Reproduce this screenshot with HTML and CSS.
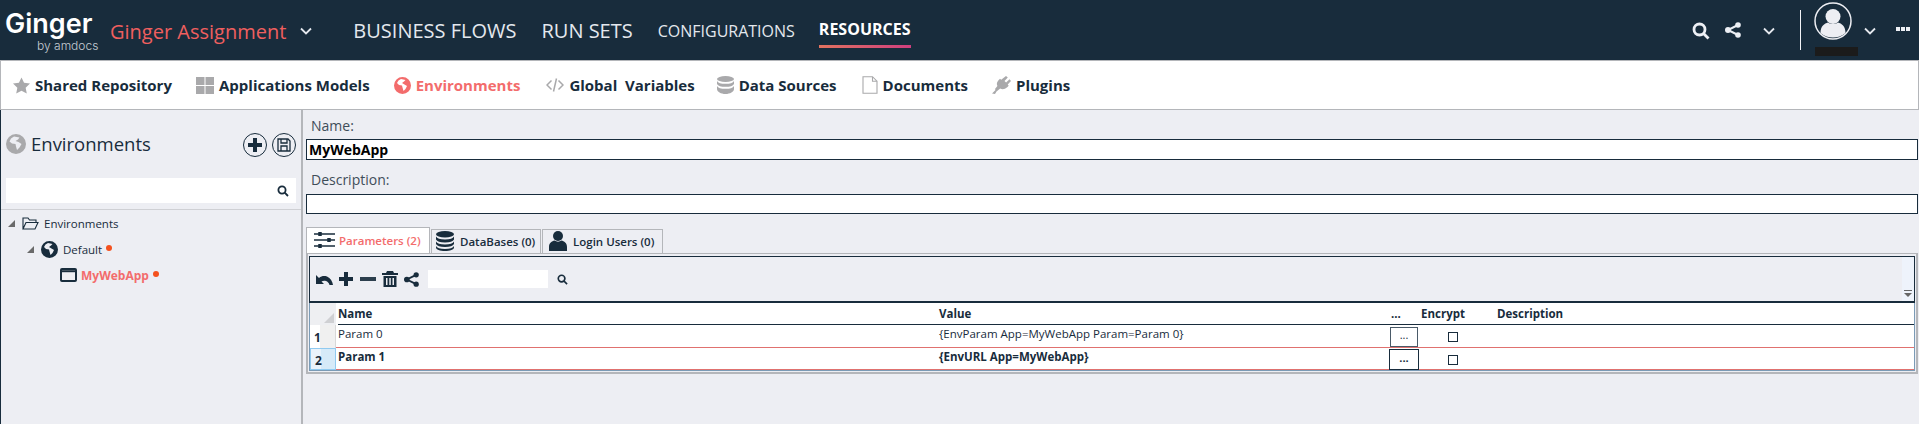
FILE: index.html
```html
<!DOCTYPE html>
<html lang="en">
<head>
  <meta charset="UTF-8">
  <title>Ginger - Environments</title>
  <link rel="stylesheet" href="styles.css">
</head>
<body>

  <!-- TOP BAR -->
  <header class="topbar">
    <div class="logo">
      <div class="logo-name">Ginger</div>
      <div class="logo-by">by amdocs</div>
    </div>
    <div class="solution">Ginger Assignment</div>
    <svg class="chevron chevron-solution" viewBox="0 0 12 8"><path d="M1 1.500l5 5 5-5"/></svg>
    <a class="nav-big nav-flows">BUSINESS FLOWS</a>
    <a class="nav-big nav-runs">RUN SETS</a>
    <a class="nav-small nav-config">CONFIGURATIONS</a>
    <a class="nav-small nav-active">RESOURCES</a>

    <div class="top-tools">
      <svg class="tool-search" viewBox="0 0 18 18"><circle cx="7.500" cy="7.500" r="5.500"/><path d="M11.500 11.500l5 5"/></svg>
      <svg class="tool-share" viewBox="0 0 16 16"><path class="share-line" d="M13 3L3 8l10 5"/><circle cx="3" cy="8" r="3"/><circle cx="13" cy="3" r="2.800"/><circle cx="13" cy="13" r="2.800"/></svg>
      <svg class="chevron chevron-share" viewBox="0 0 12 8"><path d="M1 1.500l5 5 5-5"/></svg>
      <div class="top-divider"></div>
      <div class="account">
        <svg class="avatar" viewBox="0 0 38 38">
          <circle class="avatar-ring" cx="19" cy="19" r="18"/>
          <circle cx="19" cy="14.500" r="7.500"/>
          <path d="M6.500 31c0-7 4-9.500 7.500-10.500 3 2 7 2 10 0 3.500 1 7.500 3.500 7.500 10.500-7 6-18 6-25 0z"/>
        </svg>
        <div class="account-name"></div>
      </div>
      <svg class="chevron chevron-account" viewBox="0 0 12 8"><path d="M1 1.500l5 5 5-5"/></svg>
      <div class="more-dots"><span></span><span></span><span></span></div>
    </div>
  </header>

  <!-- SUB NAV -->
  <nav class="subnav">
    <a class="sub-item sub-shared">
      <svg viewBox="0 0 18 17"><path d="M9 0l2.700 5.700 6.300.8-4.600 4.300 1.200 6.200L9 14l-5.600 3 1.200-6.200L0 6.500l6.300-.8z"/></svg>
      Shared Repository
    </a>
    <a class="sub-item sub-apps">
      <svg viewBox="0 0 18 17"><rect width="8.500" height="8"/><rect x="9.500" width="8.500" height="8"/><rect y="9" width="8.500" height="8"/><rect x="9.500" y="9" width="8.500" height="8"/></svg>
      Applications Models
    </a>
    <a class="sub-item sub-env sub-active">
      <svg viewBox="0 0 17 17"><path fill-rule="evenodd" d="M8.500 0a8.500 8.500 0 1 1 0 17 8.500 8.500 0 0 1 0-17zM7 2L4.500 3.500 3 6l2 2 3 .5.500 2 1 3.500 2-2 1.500-3-2.500-1.500L8 6l2-1.500L11.500 3z"/></svg>
      Environments
    </a>
    <a class="sub-item sub-vars">
      <svg class="icon-stroke" viewBox="0 0 18 16"><path d="M5.500 3.500L1 8l4.500 4.500M12.500 3.500L17 8l-4.500 4.500M10.500 1.500l-3 13"/></svg>
      Global&nbsp; Variables
    </a>
    <a class="sub-item sub-data">
      <svg viewBox="0 0 17 18"><ellipse cx="8.500" cy="3" rx="8.500" ry="3"/><path d="M0 5c1 2 4 2.800 8.500 2.800S16 7 17 5v3c-1 2-4 2.800-8.500 2.800S1 10 0 8zM0 10c1 2 4 2.800 8.500 2.800S16 12 17 10v3c0 2.800-4 5-8.500 5S0 15.800 0 13z"/></svg>
      Data Sources
    </a>
    <a class="sub-item sub-docs">
      <svg class="icon-stroke icon-thin" viewBox="0 0 16 18"><path d="M1 .7h9.500L15 5.200v12H1zM10.500.7v4.500H15"/></svg>
      Documents
    </a>
    <a class="sub-item sub-plugins">
      <svg viewBox="0 0 19 18"><path d="M14 0l1.800 1.600-3.300 3.500 1.600 1.500 3.400-3.400L19 5l-3.300 3.500 1 1.200-1.500 1.500c-2.500 2.200-5 2.500-7 1.200L4.500 15.500 3 18l-3-.5L3.500 14l-.5-1L5.400 10C4.400 8 4.800 6 6.500 4.200L8 2.800l1.200 1z"/></svg>
      Plugins
    </a>
  </nav>

  <main class="workspace">

    <!-- LEFT TREE -->
    <aside class="sidebar">
      <div class="side-head">
        <svg class="side-globe" viewBox="0 0 20 20"><path fill-rule="evenodd" d="M10 0a10 10 0 1 1 0 20 10 10 0 0 1 0-20zM8 2.500L5 4.500 3.500 7.500l2.500 2 3.500.5.500 2.500 1 3.500 2.500-2.500 2-3.500-3-2L9.500 7l2.500-1.500 1.500-2z"/></svg>
        <h2>Environments</h2>
        <button class="round-btn round-add">
          <svg viewBox="0 0 14 14"><path d="M5 0h4v5h5v4H9v5H5V9H0V5h5z"/></svg>
        </button>
        <button class="round-btn">
          <svg class="icon-stroke save-icon" viewBox="0 0 14 14"><path d="M1 1h10l2 2v10H1zM4 1v4h6V1M4 13V8h6v5"/></svg>
        </button>
      </div>
      <div class="side-search">
        <svg class="mag" viewBox="0 0 12 12"><circle cx="5" cy="5" r="3.600"/><path d="M7.700 7.700l3.300 3.300"/></svg>
      </div>
      <ul class="tree">
        <li class="tree-row">
          <span class="tree-arrow"></span>
          <svg class="tree-folder" viewBox="0 0 17 13"><path d="M1 12V1h5l1.500 2H14v2.500M1 12l3-6.500h12L13 12z"/></svg>
          <span class="tree-label-root">Environments</span>
        </li>
        <li class="tree-row tree-level-1">
          <span class="tree-arrow"></span>
          <svg class="tree-globe" viewBox="0 0 17 17"><path fill-rule="evenodd" d="M8.500 0a8.500 8.500 0 1 1 0 17 8.500 8.500 0 0 1 0-17zM7 2L4.500 3.500 3 6l2 2 3 .5.500 2 1 3.500 2-2 1.500-3-2.500-1.500L8 6l2-1.500L11.500 3z"/></svg>
          <span class="tree-label">Default</span>
          <span class="dirty-dot"></span>
        </li>
        <li class="tree-row tree-level-2">
          <svg class="tree-window" viewBox="0 0 17 14"><rect x="1" y="1" width="15" height="12" rx="1"/><path d="M1 3.200h15"/></svg>
          <span class="tree-label-active">MyWebApp</span>
          <span class="dirty-dot"></span>
        </li>
      </ul>
    </aside>

    <!-- RIGHT DETAIL -->
    <section class="detail">
      <label class="field-label">Name:</label>
      <div class="field field-name">MyWebApp</div>
      <label class="field-label field-label-desc">Description:</label>
      <div class="field field-desc"></div>

      <div class="tabs">
        <div class="tab tab-active tab-params">
          <svg class="icon-stroke tab-icon-sliders" viewBox="0 0 21 18"><path d="M0 3h21M0 9h21M0 15h21"/><path class="slider-knob" d="M6 1v4M15 7v4M6 13v4"/></svg>
          Parameters (2)
        </div>
        <div class="tab tab-db">
          <svg viewBox="0 0 18 20"><ellipse cx="9" cy="3.200" rx="9" ry="3.200"/><path d="M0 5.500c1 2 4 3 9 3s8-1 9-3v3c-1 2-4 3-9 3s-8-1-9-3zM0 10.500c1 2 4 3 9 3s8-1 9-3v2.500c-1 2-4 3-9 3s-8-1-9-3zM0 15c1 2 4 3 9 3s8-1 9-3v1.500c0 2-4 3.500-9 3.500s-9-1.500-9-3.500z"/></svg>
          DataBases (0)
        </div>
        <div class="tab tab-users">
          <svg viewBox="0 0 18 20"><circle cx="9" cy="5" r="5"/><path d="M0 20v-4c0-4 3-6 5.500-6.500 2 1.500 5 1.500 7 0C15 10 18 12 18 16v4z"/></svg>
          Login Users (0)
        </div>
      </div>

      <div class="tab-panel">
        <div class="toolbar">
          <svg class="tb-undo" viewBox="0 0 17 11"><path d="M0 1v9h8L5.500 7.500C7 6.500 8.500 6.500 10 7c1.500.5 3 2 3.500 4H17c-.5-3.500-2.500-7-6-8.500-3-1-5.500-.5-8 1.500z"/></svg>
          <svg class="tb-plus" viewBox="0 0 14 14"><path d="M5 0h4v5h5v4H9v5H5V9H0V5h5z"/></svg>
          <svg class="tb-minus" viewBox="0 0 16 14"><rect y="5" width="16" height="4"/></svg>
          <svg class="tb-trash" viewBox="0 0 16 16"><path d="M5 0h6l1 2h4v2H0V2h4zM1.500 5h13v11h-13zM4 7v7h1.500V7zM7.300 7v7h1.500V7zM10.500 7v7H12V7z" fill-rule="evenodd"/></svg>
          <svg class="tb-share" viewBox="0 0 16 16"><path class="share-line" d="M13 3L3 8l10 5"/><circle cx="3" cy="8" r="3"/><circle cx="13" cy="3" r="2.800"/><circle cx="13" cy="13" r="2.800"/></svg>
          <div class="tb-search"></div>
          <svg class="mag tb-mag" viewBox="0 0 12 12"><circle cx="5" cy="5" r="3.600"/><path d="M7.700 7.700l3.300 3.300"/></svg>
          <div class="tb-grip">
            <svg viewBox="0 0 8 8"><path d="M0 0h8v1H0zM0 3h8L4 7z"/></svg>
          </div>
        </div>

        <div class="grid">
          <div class="grid-corner"><span></span></div>
          <div class="grid-head">
            <span>Name</span><span>Value</span><span class="cell-center-left">...</span><span>Encrypt</span><span>Description</span>
          </div>

          <div class="row-head"><b>1</b></div>
          <div class="grid-row">
            <span>Param 0</span>
            <span>{EnvParam App=MyWebApp Param=Param 0}</span>
            <span class="cell-btn"><button class="dots-btn">...</button></span>
            <span class="cell-check"><i class="checkbox"></i></span>
            <span></span>
          </div>

          <div class="row-head row-head-selected"><b>2</b></div>
          <div class="grid-row grid-row-selected">
            <span>Param 1</span>
            <span>{EnvURL App=MyWebApp}</span>
            <span class="cell-btn"><button class="dots-btn">...</button></span>
            <span class="cell-check"><i class="checkbox"></i></span>
            <span></span>
          </div>
        </div>
      </div>
    </section>
  </main>

</body>
</html>
```

FILE: styles.css
```css
* {
  box-sizing: border-box;
}

html, body {
  height: 100%;
}

body {
  margin: 0;
  display: flex;
  flex-direction: column;
  overflow: hidden;
  font-family: "Open Sans", sans-serif;
  background: #edeef3;
  color: #182c3c;
}

svg {
  display: block;
  flex: none;
  fill: currentColor;
}

/* top bar */
.topbar {
  height: 60px;
  flex: none;
  display: flex;
  align-items: center;
  background: #182c3c;
  color: #e4e8ee;
}

.logo {
  width: 110px;
  height: 60px;
  padding: 9px 0 0 5px;
  color: #fff;
}

.logo-name {
  font-family: Inter, sans-serif;
  font-size: 27px;
  font-weight: 600;
  line-height: 30px;
}

.logo-by {
  margin: 1px 0 0 32px;
  font-family: Inter, sans-serif;
  font-size: 12px;
  font-weight: 300;
  line-height: 12px;
  color: #c6ccd4;
}

.solution {
  margin-top: 2px;
  font-size: 20px;
  color: #ef5f5f;
  white-space: nowrap;
}

.chevron {
  width: 12px;
  height: 8px;
  fill: none;
  stroke: #e4e8ee;
  stroke-width: 1.800;
}

.chevron-solution {
  margin: 2px 0 0 14px;
}

.nav-big, .nav-small {
  margin-top: 1px;
  white-space: nowrap;
}

.nav-big {
  font-size: 20px;
}

.nav-small {
  font-size: 16px;
}

.nav-flows {
  margin-left: 41px;
}

.nav-runs {
  margin-left: 25px;
}

.nav-config {
  margin-left: 25px;
}

.nav-active {
  margin: 1px 0 0 24px;
  padding-top: 3px;
  height: 34px;
  line-height: 25px;
  font-weight: 700;
  color: #fff;
  border-bottom: 3px solid;
  border-image: linear-gradient(90deg, #e2735f, #cf3f7f) 1;
}

.top-tools {
  margin-left: auto;
  display: flex;
  align-items: center;
  padding-right: 9px;
  height: 60px;
}

.tool-search {
  width: 18px;
  height: 18px;
  margin-top: 1px;
  fill: none;
  stroke: #edf0f5;
  stroke-width: 2.800;
}

.tool-share {
  width: 16px;
  height: 16px;
  margin: 0 0 0 15px;
  color: #edf0f5;
}

.share-line {
  fill: none;
  stroke: currentColor;
  stroke-width: 2;
}

.chevron-share {
  margin: 1px 0 0 22px;
}

.top-divider {
  width: 1px;
  height: 40px;
  margin: 0 0 1px 25px;
  background: #f2f3f6;
}

.account {
  width: 44px;
  margin: 0 6px 0 13px;
  height: 60px;
  padding-top: 2px;
}

.avatar {
  width: 38px;
  height: 38px;
  color: #edeef3;
}

.avatar-ring {
  fill: none;
  stroke: currentColor;
  stroke-width: 1.500;
}

.account-name {
  width: 43px;
  height: 9px;
  margin: 7px 0 0 1px;
  background: #1b1b1b;
}

.chevron-account {
  margin: 1px 0 0 0;
}

.more-dots {
  display: flex;
  gap: 1px;
  margin: 0 0 2px 20px;
}

.more-dots span {
  width: 4px;
  height: 4px;
  background: #edf0f5;
}

/* sub nav */
.subnav {
  height: 50px;
  flex: none;
  display: flex;
  align-items: center;
  background: #fff;
  border: 1px solid #b4b6ba;
  font-size: 15px;
  font-weight: 700;
  white-space: nowrap;
}

.sub-item {
  display: flex;
  align-items: center;
  color: #182c3c;
}

.sub-item svg {
  color: #a9a9ab;
  margin-right: 5px;
}

.sub-shared {
  margin-left: 12px;
}

.sub-shared svg {
  width: 17px;
  height: 17px;
}

.sub-apps {
  margin-left: 24px;
}

.sub-apps svg {
  width: 18px;
  height: 17px;
}

.sub-env {
  margin-left: 24px;
}

.sub-active, .sub-active svg {
  color: #f36c6c;
}

.sub-env svg {
  width: 17px;
  height: 17px;
}

.sub-vars {
  margin-left: 26px;
}

.sub-vars svg {
  width: 18px;
  height: 16px;
}

.icon-stroke {
  fill: none;
  stroke: currentColor;
  stroke-width: 1.500;
}

.sub-data {
  margin-left: 22px;
}

.sub-data svg {
  width: 17px;
  height: 18px;
}

.sub-docs {
  margin-left: 25px;
}

.sub-docs svg {
  width: 16px;
  height: 18px;
}

.icon-thin {
  stroke-width: 1.100;
}

.sub-plugins {
  margin-left: 24px;
}

.sub-plugins svg {
  width: 19px;
  height: 18px;
}

/* layout below the bars */
.workspace {
  flex: 1;
  display: flex;
  min-height: 0;
}

.sidebar {
  width: 303px;
  flex: none;
  border-left: 1px solid #182c3c;
  border-right: 2px solid #b4b6ba;
}

.side-head {
  height: 68px;
  display: flex;
  align-items: center;
  padding: 0 5px 0 5px;
}

.side-globe {
  width: 20px;
  height: 20px;
  color: #a9a9ab;
}

.side-head h2 {
  margin: 0 0 0 5px;
  flex: 1;
  font-size: 18.500px;
  font-weight: 400;
  line-height: 24px;
}

.round-btn {
  width: 24px;
  height: 24px;
  margin: 2px 0 0 5px;
  padding: 0;
  display: flex;
  align-items: center;
  justify-content: center;
  background: transparent;
  border: 1px solid #182c3c;
  border-radius: 50%;
  color: #182c3c;
}

.round-btn svg {
  width: 14px;
  height: 14px;
}

.save-icon {
  stroke-width: 1.300;
}

.side-search {
  height: 25px;
  margin: 0 5px 0 5px;
  display: flex;
  align-items: center;
  justify-content: flex-end;
  padding-right: 7px;
  background: #fff;
}

.mag {
  width: 12px;
  height: 12px;
  fill: none;
  stroke: #182c3c;
  stroke-width: 1.800;
}

.tree {
  list-style: none;
  margin: 6px 0 0;
  padding: 0;
  border-top: 1px solid #cfd0d4;
}

.tree-row {
  height: 26px;
  display: flex;
  align-items: center;
  padding-left: 7px;
  font-size: 11.500px;
}

.tree-arrow {
  width: 0;
  height: 0;
  margin-top: 1px;
  border-style: solid;
  border-width: 0 0 7px 7px;
  border-color: transparent transparent #6a6a6a transparent;
}

.tree-folder {
  width: 17px;
  height: 13px;
  margin-left: 7px;
  fill: none;
  stroke: #182c3c;
  stroke-width: 1.100;
}

.tree-label-root {
  margin-left: 5px;
}

.tree-level-1 {
  padding-left: 26px;
}

.tree-globe {
  width: 17px;
  height: 17px;
  margin-left: 7px;
}

.tree-label {
  margin-left: 5px;
}

.dirty-dot {
  width: 6px;
  height: 6px;
  margin: 0 0 2px 4px;
  border-radius: 50%;
  background: #f4511e;
}

.tree-level-2 {
  padding-left: 59px;
}

.tree-window {
  width: 17px;
  height: 14px;
  fill: none;
  stroke: #182c3c;
  stroke-width: 2;
}

.tree-label-active {
  margin-left: 4px;
  font-size: 12px;
  font-weight: 700;
  color: #f36c6c;
}

/* detail side */
.detail {
  flex: 1;
  min-width: 0;
  padding: 5px 1px 0 3px;
}

.field-label {
  display: block;
  height: 24px;
  padding-left: 5px;
  font-size: 14px;
  line-height: 22px;
  color: #3f4d59;
}

.field {
  border: 1px solid #182c3c;
  background: #fff;
}

.field-name {
  height: 21px;
  padding-left: 2px;
  font-size: 14px;
  font-weight: 700;
  line-height: 19px;
  color: #000;
}

.field-label-desc {
  margin-top: 9px;
  height: 25px;
}

.field-desc {
  height: 20px;
}

.tabs {
  display: flex;
  align-items: flex-end;
  margin-top: 13px;
  height: 26px;
  font-size: 11.500px;
  font-weight: 600;
}

.tab {
  display: flex;
  align-items: center;
  height: 24px;
  margin-right: 1px;
  padding-bottom: 1px;
  border: 1px solid #b4b6ba;
  border-bottom: none;
}

.tab-active {
  height: 26px;
  width: 124px;
  padding-left: 7px;
  background: #fff;
  color: #f36c6c;
}

.tab-icon-sliders {
  width: 21px;
  height: 18px;
  margin-right: 4px;
  color: #182c3c;
}

.slider-knob {
  stroke-width: 3.500;
}

.tab-db {
  width: 110px;
  padding-left: 4px;
}

.tab-db svg, .tab-users svg {
  width: 18px;
  height: 20px;
  margin-right: 6px;
}

.tab-users {
  width: 121px;
  padding-left: 6px;
}

.tab-panel {
  height: 121px;
  padding: 2px 1px 2px;
  border: 2px solid #b4b6ba;
  border-top-width: 1px;
}

.toolbar {
  height: 47px;
  display: flex;
  align-items: center;
  position: relative;
  padding-left: 6px;
  border: 1px solid #182c3c;
  border-bottom-width: 2px;
}

.toolbar > svg {
  color: #182c3c;
}

.tb-undo {
  width: 17px;
  height: 11px;
}

.tb-plus {
  width: 14px;
  height: 14px;
  margin-left: 6px;
}

.tb-minus {
  width: 16px;
  height: 14px;
  margin-left: 7px;
  opacity: .9;
}

.tb-trash {
  width: 16px;
  height: 16px;
  margin-left: 6px;
}

.tb-share {
  width: 15px;
  height: 15px;
  margin-left: 6px;
}

.tb-search {
  width: 120px;
  height: 18px;
  margin-left: 9px;
  background: #fff;
}

.tb-mag {
  width: 11px;
  height: 11px;
  margin-left: 9px;
}

.tb-grip {
  position: absolute;
  top: 0;
  right: 0;
  bottom: 0;
  width: 12px;
  background: #eef3fb;
}

.tb-grip svg {
  position: absolute;
  left: 2px;
  bottom: 3px;
  width: 8px;
  height: 8px;
  color: #666;
}

.grid {
  display: grid;
  grid-template-columns: 26px 1fr;
  grid-template-rows: 22px 23px 22px;
  background: #fff;
  border: 1px solid #7b9bb6;
  border-top: none;
  font-size: 11.500px;
}

.grid-corner {
  display: flex;
  align-items: flex-end;
  justify-content: flex-end;
  padding: 0 2px 2px 0;
  background: #eeeff2;
}

.grid-corner span {
  width: 0;
  height: 0;
  border-style: solid;
  border-width: 0 0 10px 10px;
  border-color: transparent transparent #cfd0d3 transparent;
}

.grid-head, .grid-row {
  display: grid;
  grid-template-columns: 601px 451px 31px 76px 1fr;
  align-items: center;
  padding-left: 2px;
}

.grid-head {
  margin-left: 2px;
  padding-left: 0;
  border-bottom: 1px solid #182c3c;
  font-weight: 700;
}

.cell-center-left {
  padding-left: 1px;
}

.row-head {
  display: flex;
  align-items: center;
  padding: 2px 0 0 4px;
  background: linear-gradient(90deg, #fff 40%, #f0f0f0 40%);
  border-right: 1px solid #d8d8d8;
  font-size: 12px;
}

.row-head-selected {
  background: linear-gradient(90deg, #eaf3fb 40%, #d6eaf8 40%);
  border: 1px solid #90caf0;
}

.grid-row {
  border-bottom: 1px solid #e0716f;
  line-height: 18px;
}

.grid-row > span {
  padding-bottom: 5px;
}

.grid-row-selected {
  font-weight: 700;
}

.dots-btn {
  width: 28px;
  height: 20px;
  padding: 0 0 4px;
  font: inherit;
  font-size: 11px;
  line-height: 14px;
  background: #fff;
  color: #182c3c;
  border: 1px solid #4a5a68;
}

.grid-row-selected .dots-btn {
  width: 30px;
  height: 21px;
  margin-left: -1px;
  border-color: #182c3c;
}

.grid-row > .cell-btn, .grid-row > .cell-check {
  padding-bottom: 0;
  display: flex;
  align-items: center;
}

.cell-check {
  padding-left: 27px;
}

.checkbox {
  display: block;
  width: 10px;
  height: 10px;
  border: 1px solid #182c3c;
  background: #fff;
}
```
